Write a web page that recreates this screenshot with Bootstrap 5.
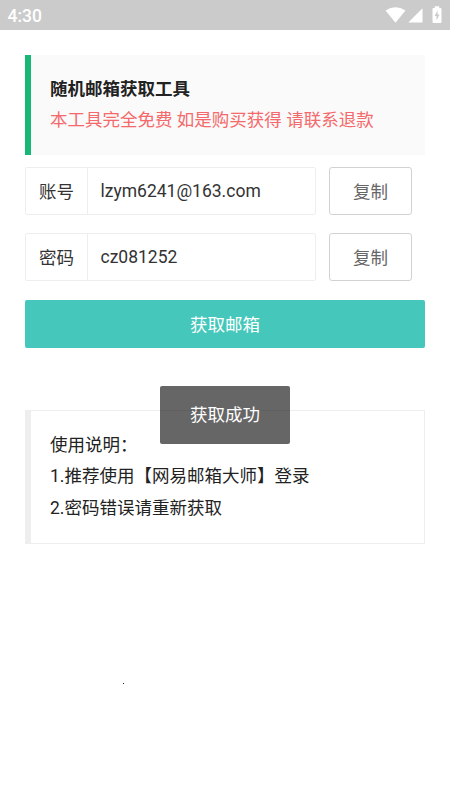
<!DOCTYPE html>
<html lang="zh-CN">
<head>
<meta charset="utf-8">
<meta name="viewport" content="width=device-width, initial-scale=1">
<title>随机邮箱获取工具</title>
<link href="https://cdn.jsdelivr.net/npm/bootstrap@5.3.0/dist/css/bootstrap.min.css" rel="stylesheet">
<style>
body { font: 400 17.5px/31.5px Roboto, "Noto Sans CJK SC", sans-serif; color: #333; background: #fff; height: 800px; overflow: hidden; }
.status-bar { height: 30px; background: #cbcbcb; font-size: 17.5px; font-weight: 500; line-height: 32px; padding: 0 8px 0 7.5px; }
.page { padding: 25px 25px 0; }
.quote { height: 100px; padding: 18.75px 19px; border-left: 6px solid #16b777; background: #fafafa; color: #222; }
.quote-title { font-weight: 700; }
.quote-warn { color: #f4696b; }
.field-row { height: 48px; gap: 13px; margin-top: 18px; }
.quote + .field-row { margin-top: 12px; }
.field-box { width: 291px; border: 1px solid #eee; border-radius: 2px; }
.field-label { width: 62px; padding-top: 3px; border-right: 1px solid #eee; }
.field-input { font-size: 17.5px; color: #333; padding: 1px 0 0 12.5px; border: 0; border-radius: 0; background: transparent; }
.btn-copy { width: 83px; font-size: 17.5px; color: #666; border: 1px solid #d2d2d2; border-radius: 3px; padding: 2px 0 0; }
.btn-fetch { height: 47.5px; margin-top: 19px; font-size: 17.5px; color: #fff; background: #45c7bb; border: 0; border-radius: 2px; padding: 2px 0 0; }
.guide { height: 134px; margin-top: 62.5px; padding: 18.75px 19px; border: 1px solid #eee; border-left: 6px solid #eee; color: #222; }
.toast-tip { top: 386px; width: 130px; height: 58px; padding-top: 1px; background: rgba(0,0,0,.6); color: #fff; border-radius: 2px; }
.pointer-dot { left: 123px; top: 683px; width: 1px; height: 1px; background: #222; }
</style>
<script src="https://cdn.jsdelivr.net/npm/bootstrap@5.3.0/dist/js/bootstrap.bundle.min.js"></script>
</head>
<body class="position-relative">
<header class="status-bar d-flex justify-content-between text-white">
  <span>4:30</span>
  <svg width="58" height="30" viewBox="384 0 58 30" fill="#fff" aria-hidden="true">
    <path d="M385.5 10.5Q395.5 4 405.5 10.5L395.5 22.7Z"/>
    <path d="M422.5 8.3V22.6H408.3Z"/>
    <path fill-rule="evenodd" d="M434.8 6.2h4.4v1.7h1.3q1 0 1 1v13q0 1-1 1h-7q-1 0-1-1v-13q0-1 1-1h1.3zM437.6 10.4L434.6 16h1.9v4.3L439.6 14.5h-2z"/>
  </svg>
</header>
<main class="page">
  <section class="quote">
    <div class="quote-title">随机邮箱获取工具</div>
    <div class="quote-warn text-nowrap">本工具完全免费 如是购买获得 请联系退款</div>
  </section>
  <div class="field-row d-flex">
    <div class="field-box d-flex">
      <label class="field-label flex-shrink-0 d-flex align-items-center justify-content-center" for="account">账号</label>
      <input class="field-input form-control shadow-none" id="account" value="lzym6241@163.com">
    </div>
    <button class="btn btn-copy" type="button">复制</button>
  </div>
  <div class="field-row d-flex">
    <div class="field-box d-flex">
      <label class="field-label flex-shrink-0 d-flex align-items-center justify-content-center" for="password">密码</label>
      <input class="field-input form-control shadow-none" id="password" value="cz081252">
    </div>
    <button class="btn btn-copy" type="button">复制</button>
  </div>
  <button class="btn btn-fetch w-100 d-block" type="button">获取邮箱</button>
  <section class="guide">
    <div>使用说明：</div>
    <div>1.推荐使用【网易邮箱大师】登录</div>
    <div>2.密码错误请重新获取</div>
  </section>
</main>
<div class="toast-tip position-absolute start-50 translate-middle-x d-flex align-items-center justify-content-center" role="status">获取成功</div>
<span class="pointer-dot position-absolute"></span>
</body>
</html>
